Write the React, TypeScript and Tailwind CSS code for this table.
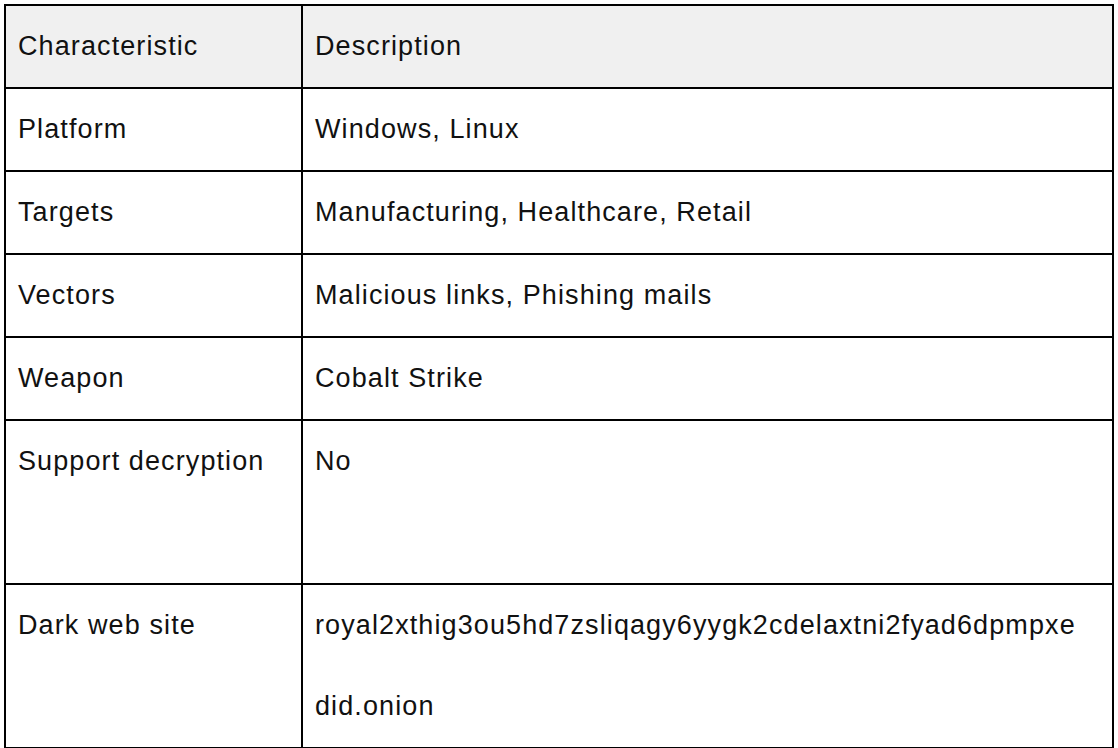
import React from 'react';

const rows: { label: string; value: React.ReactNode; tall?: boolean }[] = [
  { label: 'Platform', value: 'Windows, Linux' },
  { label: 'Targets', value: 'Manufacturing, Healthcare, Retail' },
  { label: 'Vectors', value: 'Malicious links, Phishing mails' },
  { label: 'Weapon', value: 'Cobalt Strike' },
  { label: 'Support decryption', value: 'No', tall: true },
  {
    label: 'Dark web site',
    value: (
      <>
        royal2xthig3ou5hd7zsliqagy6yygk2cdelaxtni2fyad6dpmpxe
        <br />
        did.onion
      </>
    ),
  },
];

export default function App() {
  return (
    <div className="min-h-[748px] bg-white pt-1 pl-1 font-['Liberation_Sans',sans-serif] text-[27px] tracking-[1.1px] text-[#111]">
      <table className="w-[1110px] border-collapse border-2 border-black leading-[81px]">
        <thead>
          <tr className="bg-[#f0f0f0]">
            <th className="w-[297px] border-2 border-black px-3 text-left align-top font-normal">Characteristic</th>
            <th className="border-2 border-black px-3 text-left align-top font-normal">Description</th>
          </tr>
        </thead>
        <tbody>
          {rows.map((r) => (
            <tr key={r.label}>
              <td className="border-2 border-black px-3 align-top whitespace-nowrap">{r.label}</td>
              <td className="border-2 border-black px-3 align-top">
                {r.value}
                {r.tall && <div className="h-[81px]" />}
              </td>
            </tr>
          ))}
        </tbody>
      </table>
    </div>
  );
}
